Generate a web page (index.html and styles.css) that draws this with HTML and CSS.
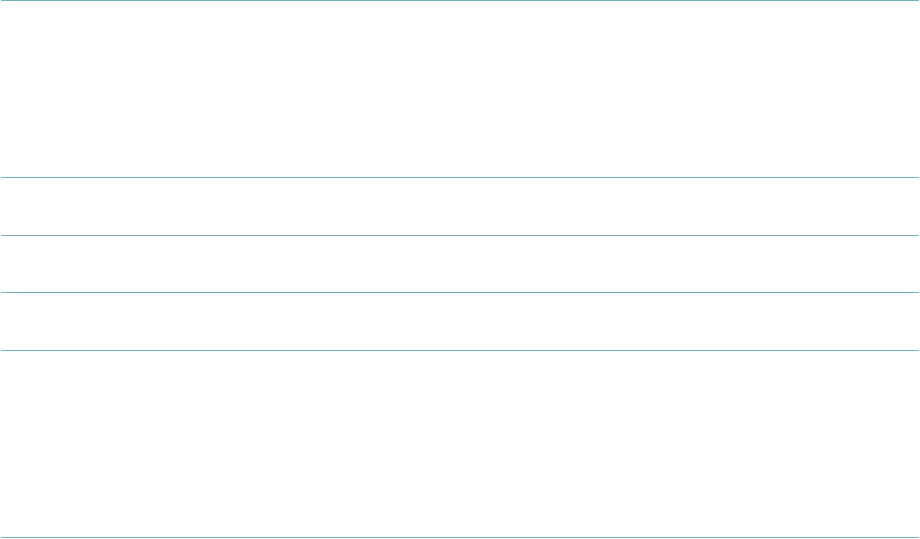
FILE: index.html
```html
<!DOCTYPE html>
<html>
<head>
<meta charset="utf-8">
<link rel="stylesheet" href="styles.css">
</head>
<body>
<div class="table">
  <div class="row r1"></div>
  <div class="row r2"></div>
  <div class="row r3"></div>
  <div class="row r4"></div>
  <div class="row r5"></div>
</div>
</body>
</html>
```
FILE: styles.css
```css
html, body {
  margin: 0;
  padding: 0;
  background: #ffffff;
  font-family: "Liberation Sans", Arial, sans-serif;
}
.table {
  margin-left: 1px;
  width: 918px;
  border-top: 1px solid #74b3c7;
  display: flex;
  flex-direction: column;
}
.row {
  border-bottom: 1px solid #74b3c7;
}
.r1 { height: 176px; }
.r2 { height: 57px; border-bottom-color: #7aa9b8; }
.r3 { height: 56px; }
.r4 { height: 57px; }
.r5 { height: 186px; }
```
